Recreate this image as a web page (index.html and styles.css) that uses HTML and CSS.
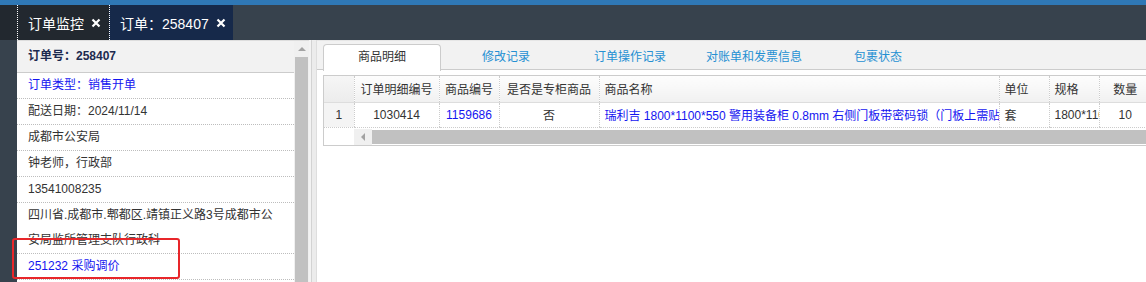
FILE: index.html
```html
<!DOCTYPE html>
<html lang="zh-CN">
<head>
  <meta charset="UTF-8"/>
  <meta name="viewport" content="width=device-width, initial-scale=1.0"/>
  <title>订单：258407</title>
  <link rel="stylesheet" href="styles.css">
</head>
<body>

  <div class="topbar">
    <div class="topbar-lead"></div>
    <div class="page-tab tab-home">
      <span>订单监控</span>
      <svg class="close" viewBox="0 0 10 10"><path d="M1.5 1.5 L8.5 8.5 M8.5 1.5 L1.5 8.5"/></svg>
    </div>
    <div class="page-tab tab-current">
      <span>订单：258407</span>
      <svg class="close" viewBox="0 0 10 10"><path d="M1.5 1.5 L8.5 8.5 M8.5 1.5 L1.5 8.5"/></svg>
    </div>
  </div>

  <div class="workspace">
    <aside class="side">
      <div class="side-list">
        <div class="side-head">订单号：258407</div>
        <div class="side-row link">订单类型：销售开单</div>
        <div class="side-row">配送日期：2024/11/14</div>
        <div class="side-row">成都市公安局</div>
        <div class="side-row">钟老师，行政部</div>
        <div class="side-row">13541008235</div>
        <div class="side-row">四川省.成都市.郫都区.靖镇正义路3号成都市公安局监所管理支队行政科</div>
        <div class="side-row link">251232 采购调价</div>
      </div>
      <div class="side-scroll">
        <div class="scroll-up"><span class="arrow-up"></span></div>
        <div class="scroll-thumb"></div>
      </div>
    </aside>

    <div class="splitter"></div>

    <section class="detail">
      <ul class="detail-tabs">
        <li class="active">商品明细</li>
        <li>修改记录</li>
        <li>订单操作记录</li>
        <li>对账单和发票信息</li>
        <li>包裹状态</li>
      </ul>

      <div class="detail-body">
        <div class="grid">
          <table>
            <colgroup>
              <col style="width:30px">
              <col style="width:85px">
              <col style="width:60px">
              <col style="width:100px">
              <col style="width:400px">
              <col style="width:50px">
              <col style="width:50px">
              <col style="width:52px">
            </colgroup>
            <thead>
              <tr>
                <th class="num"></th>
                <th class="center">订单明细编号</th>
                <th class="center">商品编号</th>
                <th class="center">是否是专柜商品</th>
                <th>商品名称</th>
                <th>单位</th>
                <th>规格</th>
                <th class="center">数量</th>
              </tr>
            </thead>
            <tbody>
              <tr>
                <td class="num">1</td>
                <td class="center">1030414</td>
                <td class="center link">1159686</td>
                <td class="center">否</td>
                <td class="link">瑞利吉 1800*1100*550 警用装备柜 0.8mm 右侧门板带密码锁（门板上需贴公安标识）</td>
                <td>套</td>
                <td>1800*1100*550</td>
                <td class="center">10</td>
              </tr>
            </tbody>
          </table>
          <div class="hscroll">
            <div class="hscroll-pad"></div>
            <div class="hscroll-left"><span class="arrow-left"></span></div>
            <div class="hscroll-thumb"></div>
          </div>
        </div>
      </div>
    </section>

    <div class="mark"></div>
  </div>

</body>
</html>
```

FILE: styles.css
```css
:root {
  --bar-dark: #37424d;
  --tab-dark: #22282f;
  --tab-navy: #16294a;
  --line: #cccccc;
  --dots: #bdbdbd;
  --link: #1515f0;
  --tab-link: #2590d2;
}

* {
  margin: 0;
  padding: 0;
  box-sizing: border-box;
}

body {
  height: 100vh;
  overflow: hidden;
  background: var(--bar-dark);
  font-family: "Liberation Sans", "Noto Sans CJK SC", sans-serif;
  font-size: 12px;
  color: #333;
}

/* page tabs */

.topbar {
  height: 40px;
  border-top: 5px solid #2f78b6;
  background: var(--bar-dark);
  display: flex;
}

.topbar-lead {
  width: 17px;
  background: var(--tab-dark);
}

.page-tab {
  display: flex;
  align-items: center;
  gap: 7px;
  padding: 0 7px 0 10px;
  color: #fff;
  font-size: 14px;
  border-left: 1px dotted #fff;
}

.tab-home {
  background: var(--tab-dark);
  width: 92px;
}

.tab-current {
  background: var(--tab-navy);
  width: 124px;
}

.close {
  width: 10px;
  height: 10px;
  stroke: #fff;
  stroke-width: 2.2;
  fill: none;
}

/* work area */

.workspace {
  position: relative;
  margin-left: 17px;
  height: calc(100vh - 40px);
  background: #fff;
  display: flex;
}

.side {
  width: 292px;
  display: flex;
  border-top: 1px solid #dddddd;
}

.side-list {
  width: 277px;
}

.side-head {
  height: 32px;
  line-height: 31px;
  padding-left: 11px;
  background: #f2f2f2;
  border-bottom: 1px solid var(--line);
  font-weight: bold;
  color: #1d2a4f;
}

.side-row {
  line-height: 25px;
  padding: 0 16px 0 11px;
  border-bottom: 1px dotted var(--dots);
}

.link {
  color: var(--link);
}

.side-scroll {
  width: 15px;
  display: flex;
  flex-direction: column;
  background: #f0f0f0;
}

.scroll-up {
  height: 16px;
  display: flex;
  justify-content: center;
  align-items: center;
}

.arrow-up {
  border-left: 4px solid transparent;
  border-right: 4px solid transparent;
  border-bottom: 4px solid #a3a3a3;
}

.scroll-thumb {
  flex: 1;
  margin: 0 1px;
  background: #c1c1c1;
}

.splitter {
  width: 8px;
  background: linear-gradient(to right, #f3f3f3 0 2px, #d3d3d3 2px 3px, #ececec 3px 7px, #dedede 7px);
}

.detail {
  flex: 1;
  min-width: 0;
}

.detail-tabs {
  list-style: none;
  height: 30px;
  padding: 3px 0 0 6px;
  display: flex;
  gap: 6px;
  background: #f2f2f2;
  border-top: 1px solid #e6e6e6;
  border-bottom: 1px solid var(--line);
}

.detail-tabs li {
  width: 118px;
  height: 27px;
  line-height: 25px;
  text-align: center;
  color: var(--tab-link);
  border: 1px solid transparent;
  border-bottom: none;
}

.detail-tabs li.active {
  background: #fff;
  color: #333;
  border-color: var(--line);
  border-radius: 4px 4px 0 0;
}

.detail-body {
  padding: 5px 0 0 6px;
  overflow: hidden;
}

.grid {
  width: 840px;
  border: 1px solid var(--line);
  border-right: none;
}

table {
  table-layout: fixed;
  border-collapse: collapse;
  width: 827px;
}

th,
td {
  white-space: nowrap;
  overflow: hidden;
  padding: 0 5px;
  text-align: left;
  font-weight: normal;
  border-left: 1px dotted var(--line);
}

th:first-child,
td:first-child {
  border-left: none;
}

th {
  height: 26px;
  background: linear-gradient(#fdfdfd, #f1f1f1);
  border-bottom: 1px solid #dddddd;
}

td {
  height: 25px;
  border-bottom: 1px dotted var(--line);
}

.center {
  text-align: center;
  padding: 0 2px;
}

.num {
  text-align: center;
  background: #f4f4f4;
}

th.num {
  background: linear-gradient(#f6f6f6, #ececec);
}

.hscroll {
  height: 17px;
  display: flex;
  padding-top: 1px;
}

.hscroll-pad {
  width: 30px;
}

.hscroll-left {
  width: 18px;
  background: #f0f0f0;
  display: flex;
  align-items: center;
  justify-content: center;
}

.arrow-left {
  border-top: 4px solid transparent;
  border-bottom: 4px solid transparent;
  border-right: 4px solid #a3a3a3;
}

.hscroll-thumb {
  flex: 1;
  margin: 1px 0;
  background: #c1c1c1;
}

/* annotation frame drawn over the side list */
.mark {
  position: absolute;
  left: -5px;
  top: 198px;
  width: 168px;
  height: 41px;
  border: 2px solid #e8262a;
  border-radius: 3px;
}
```
